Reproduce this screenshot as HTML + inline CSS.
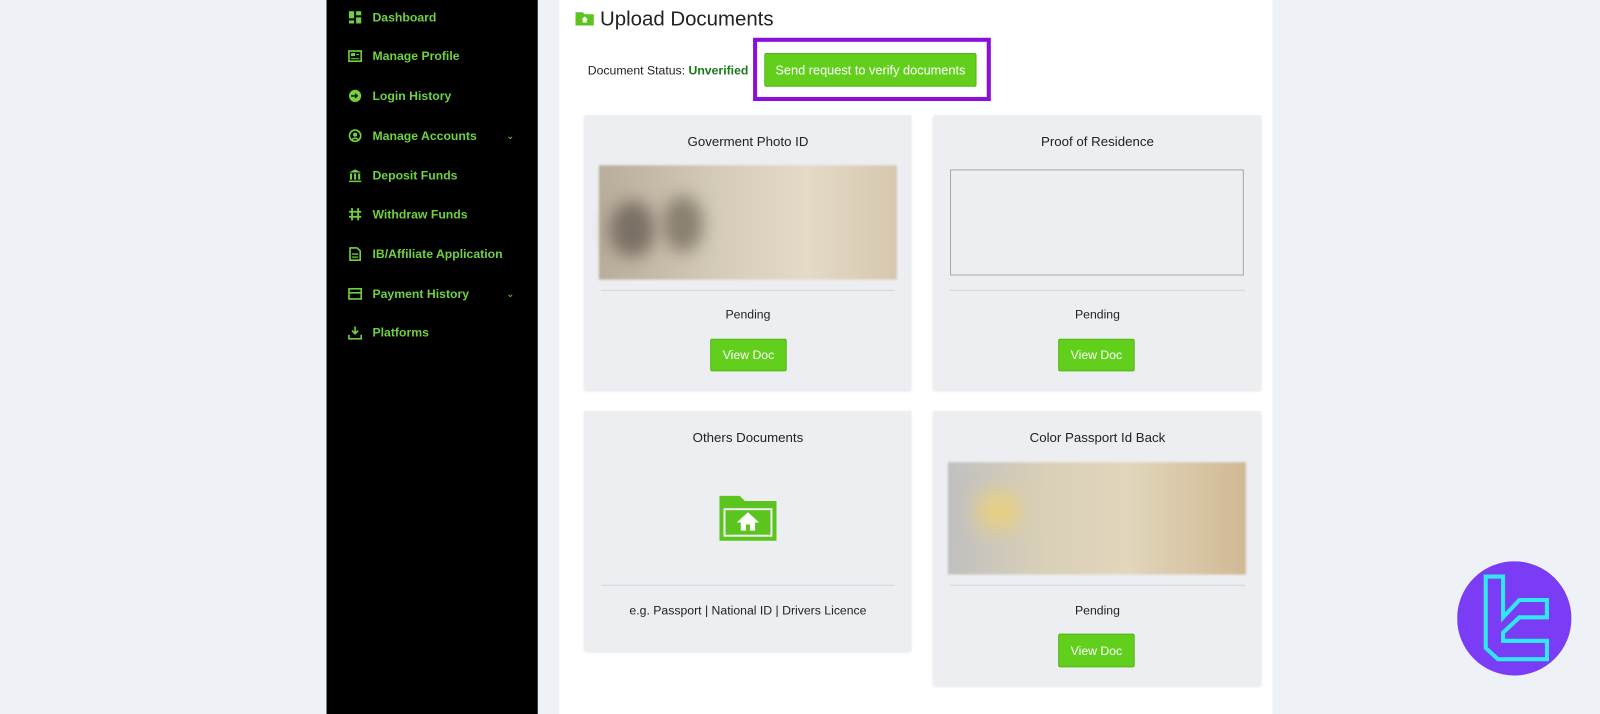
<!DOCTYPE html>
<html><head><meta charset="utf-8"><style>
*{margin:0;padding:0;box-sizing:border-box}
body{width:1600px;height:700px;background:#eef1f6;font-family:"Liberation Sans",Arial,sans-serif;position:relative;overflow:hidden}
#w{position:absolute;left:0;top:0;width:1568px;height:686px;transform:scale(1.02041);transform-origin:0 0}
.sb{position:absolute;left:320px;top:0;width:207px;height:700px;background:#000}
.it{position:absolute;left:21px;color:#6fd13f;font-size:12px;font-weight:bold;display:flex;align-items:center}
.it svg{width:14px;height:14px;margin-right:10px}
.chev{position:absolute;left:176px;color:#6fd13f;font-size:10px}
.main{position:absolute;left:548px;top:0;width:699px;height:700px;background:#fff}
.card{position:absolute;background:#eceef2;box-shadow:0 1px 3px rgba(0,0,0,.15);text-align:center;font-size:13px;color:#222}
.card h4{font-weight:normal;font-size:13px;position:absolute;width:100%;top:18px}
.hr{position:absolute;left:16px;right:16px;height:1px;background:#d4d6da}
.btn{position:absolute;background:#63cf1d;color:#fff;font-size:12px;border-radius:2px;border:1px solid #52b515;display:flex;align-items:center;justify-content:center}
.lbl{position:absolute;width:100%;font-size:12px}
</style></head><body><div id="w">
<div class="sb">
<div class="it" style="top:10px"><svg viewBox="0 0 14 14"><rect x="1" y="1" width="5" height="7" fill="#6fd13f"/><rect x="8" y="1" width="5" height="4" fill="#6fd13f"/><rect x="1" y="10" width="5" height="3" fill="#6fd13f"/><rect x="8" y="7" width="5" height="6" fill="#6fd13f"/></svg>Dashboard</div>
<div class="it" style="top:48px"><svg viewBox="0 0 14 14"><rect x="1" y="2" width="12" height="10" fill="none" stroke="#6fd13f" stroke-width="1.6"/><rect x="3" y="4" width="4" height="3" fill="#6fd13f"/><rect x="8" y="5" width="3" height="1" fill="#6fd13f"/><rect x="3" y="9" width="8" height="1" fill="#6fd13f"/></svg>Manage Profile</div>
<div class="it" style="top:87px"><svg viewBox="0 0 14 14"><circle cx="7" cy="7" r="6" fill="#6fd13f"/><path d="M3 7h6M7 5l2 2-2 2" stroke="#000" stroke-width="1.3" fill="none"/></svg>Login History</div>
<div class="it" style="top:126px"><svg viewBox="0 0 14 14"><circle cx="7" cy="7" r="5.5" fill="none" stroke="#6fd13f" stroke-width="1.6"/><circle cx="7" cy="6" r="2" fill="#6fd13f"/><path d="M4 11c1-2 5-2 6 0" stroke="#6fd13f" stroke-width="1.5" fill="none"/></svg>Manage Accounts</div>
<div class="chev" style="top:128px">&#8964;</div>
<div class="it" style="top:165px"><svg viewBox="0 0 14 14"><path d="M1 4L7 1l6 3z M1 12h12v1.5H1z" fill="#6fd13f"/><rect x="2" y="5" width="2" height="6" fill="#6fd13f"/><rect x="6" y="5" width="2" height="6" fill="#6fd13f"/><rect x="10" y="5" width="2" height="6" fill="#6fd13f"/></svg>Deposit Funds</div>
<div class="it" style="top:203px"><svg viewBox="0 0 14 14"><path d="M4 1v12M10 1v12M1 4.5h12M1 9.5h12" stroke="#6fd13f" stroke-width="1.8"/></svg>Withdraw Funds</div>
<div class="it" style="top:242px"><svg viewBox="0 0 14 14"><path d="M2 1h7l3 3v9H2z" fill="none" stroke="#6fd13f" stroke-width="1.6"/><path d="M4 7h6M4 10h6" stroke="#6fd13f" stroke-width="1.3"/></svg>IB/Affiliate Application</div>
<div class="it" style="top:281px"><svg viewBox="0 0 14 14"><rect x="1" y="2" width="12" height="10" fill="none" stroke="#6fd13f" stroke-width="1.6"/><path d="M1 6h12" stroke="#6fd13f" stroke-width="1.6"/></svg>Payment History</div>
<div class="chev" style="top:283px">&#8964;</div>
<div class="it" style="top:319px"><svg viewBox="0 0 14 14"><path d="M7 1v7M4 5l3 3 3-3M1 9v4h12V9" stroke="#6fd13f" stroke-width="1.6" fill="none"/></svg>Platforms</div>
</div>
<div class="main">
<svg style="position:absolute;left:16px;top:11px" width="18" height="14" viewBox="0 0 18 14"><path d="M0 1h7l2 2h9v11H0z" fill="#5cc41f"/><path d="M9 5l3 3h-1v3H7V8H6z" fill="#fff"/></svg>
<div style="position:absolute;left:40px;top:8px;font-size:20px;color:#222">Upload Documents</div>
<div style="position:absolute;left:28px;top:62px;font-size:12px;color:#222">Document Status: <b style="color:#1a7a1a">Unverified</b></div>
<div style="position:absolute;left:190px;top:37px;width:233px;height:62px;border:4px solid #8a0fd8;background:#fff"></div>
<div class="btn" style="left:201px;top:52px;width:208px;height:33px;font-size:12.5px">Send request to verify documents</div>
<div class="card" style="left:25px;top:113px;width:320px;height:269px"><h4>Goverment Photo ID</h4>
<div style="position:absolute;left:14px;top:49px;width:292px;height:112px;background:linear-gradient(90deg,#b8ac9a,#d5cbb9 40%,#e4dac6 70%,#d6c7ae);filter:blur(1px)"><div style="position:absolute;left:10px;top:35px;width:45px;height:55px;border-radius:50%;background:#7a7065;filter:blur(8px)"></div><div style="position:absolute;left:62px;top:30px;width:40px;height:55px;border-radius:50%;background:#8a8070;filter:blur(8px)"></div></div>
<div class="hr" style="top:171px"></div><div class="lbl" style="top:188px">Pending</div>
<div class="btn" style="left:123px;top:219px;width:75px;height:32px">View Doc</div></div>
<div class="card" style="left:367px;top:113px;width:321px;height:269px"><h4>Proof of Residence</h4>
<div style="position:absolute;left:16px;top:53px;width:288px;height:104px;border:1px solid #aaa"></div>
<div class="hr" style="top:171px"></div><div class="lbl" style="top:188px">Pending</div>
<div class="btn" style="left:122px;top:219px;width:75px;height:32px">View Doc</div></div>
<div class="card" style="left:25px;top:403px;width:320px;height:235px"><h4>Others Documents</h4>
<svg style="position:absolute;left:132px;top:81px" width="56" height="46" viewBox="0 0 56 46"><path d="M0 2h20l5 5h31v39H0z" fill="#5cc41f"/><rect x="4" y="14" width="48" height="28" fill="#eceef2"/><rect x="6" y="16" width="44" height="24" fill="#5cc41f"/><path d="M28 18l11 10h-4v8H21v-8h-4z" fill="#fff"/><rect x="26" y="30" width="4" height="6" fill="#5cc41f"/></svg>
<div class="hr" style="top:170px"></div><div class="lbl" style="top:188px">e.g. Passport | National ID | Drivers Licence</div></div>
<div class="card" style="left:367px;top:403px;width:321px;height:269px"><h4>Color Passport Id Back</h4>
<div style="position:absolute;left:14px;top:50px;width:292px;height:110px;background:linear-gradient(90deg,#c0c0c0,#d8cfb8 30%,#e2d6bc 60%,#d0b994);filter:blur(1px)"><div style="position:absolute;left:30px;top:30px;width:40px;height:35px;background:#e8d080;filter:blur(10px)"></div></div>
<div class="hr" style="top:170px"></div><div class="lbl" style="top:188px">Pending</div>
<div class="btn" style="left:122px;top:218px;width:75px;height:33px">View Doc</div></div>
</div>
<svg style="position:absolute;left:1428px;top:550px" width="112" height="112" viewBox="0 0 112 112"><circle cx="56" cy="56" r="56" fill="#7b3cf5"/><path d="M28 15h17v40l16-17h27v17H61l-16 15v8h43v18H40l-12-11z" fill="none" stroke="#2fe8f0" stroke-width="4"/></svg>
</div></body></html>
